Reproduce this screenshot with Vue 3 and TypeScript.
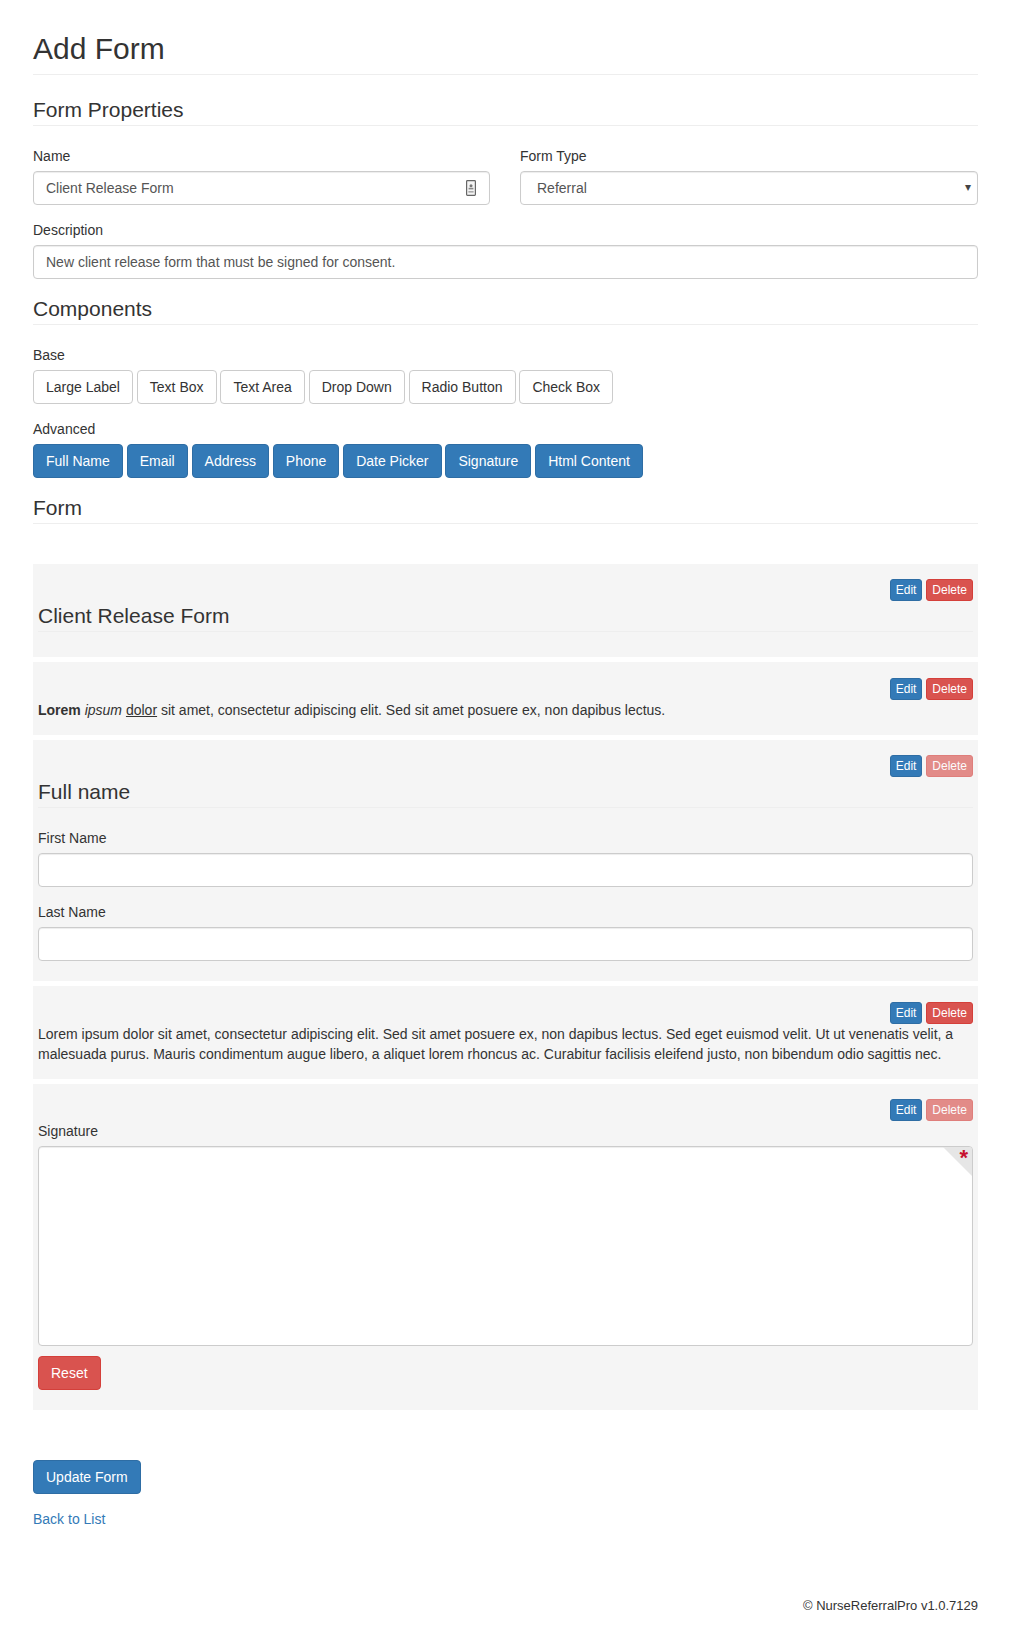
<script setup lang="ts">
const base: string[] = ['Large Label', 'Text Box', 'Text Area', 'Drop Down', 'Radio Button', 'Check Box']
const advanced: string[] = ['Full Name', 'Email', 'Address', 'Phone', 'Date Picker', 'Signature', 'Html Content']
</script>

<template>
  <div class="page">
    <header class="title-bar"><h1>Add Form</h1></header>

    <h3 class="section">Form Properties</h3>
    <div class="two-col">
      <div class="group">
        <label>Name</label>
        <div class="input-wrap">
          <input class="control" type="text" value="Client Release Form" />
          <svg class="field-icon" viewBox="0 0 10 16" width="10" height="16" aria-hidden="true">
            <rect x="0.6" y="0.6" width="8.8" height="14.8" rx="0.8" fill="#f4f4f4" stroke="#666" stroke-width="1.2" />
            <circle cx="5" cy="5.8" r="1.5" fill="#777" />
            <rect x="2.6" y="7.8" width="4.8" height="1.6" fill="#888" />
            <rect x="2.4" y="11" width="5.2" height="1.6" fill="#aaa" />
          </svg>
        </div>
      </div>
      <div class="group">
        <label>Form Type</label>
        <div class="input-wrap">
          <select class="control select">
            <option>Referral</option>
          </select>
          <span class="caret">▾</span>
        </div>
      </div>
    </div>
    <div class="group">
      <label>Description</label>
      <input class="control" type="text" value="New client release form that must be signed for consent." />
    </div>

    <h3 class="section">Components</h3>
    <div class="group">
      <label>Base</label>
      <div class="btn-row">
        <button v-for="b in base" :key="b" class="btn btn-default">{{ b }}</button>
      </div>
    </div>
    <div class="group">
      <label>Advanced</label>
      <div class="btn-row">
        <button v-for="a in advanced" :key="a" class="btn btn-primary">{{ a }}</button>
      </div>
    </div>

    <h3 class="section">Form</h3>

    <div class="stack">
      <section class="panel">
        <div class="tools">
          <button class="xs btn-primary">Edit</button>
          <button class="xs btn-danger">Delete</button>
        </div>
        <h3 class="section">Client Release Form</h3>
      </section>

      <section class="panel text-panel">
        <div class="tools">
          <button class="xs btn-primary">Edit</button>
          <button class="xs btn-danger">Delete</button>
        </div>
        <p><strong>Lorem</strong> <em>ipsum</em> <u>dolor</u> sit amet, consectetur adipiscing elit. Sed sit amet posuere ex, non dapibus lectus.</p>
      </section>

      <section class="panel">
        <div class="tools">
          <button class="xs btn-primary">Edit</button>
          <button class="xs btn-danger" disabled>Delete</button>
        </div>
        <h3 class="section">Full name</h3>
        <div class="group">
          <label>First Name</label>
          <input class="control" type="text" />
        </div>
        <div class="group">
          <label>Last Name</label>
          <input class="control" type="text" />
        </div>
      </section>

      <section class="panel text-panel">
        <div class="tools">
          <button class="xs btn-primary">Edit</button>
          <button class="xs btn-danger">Delete</button>
        </div>
        <p>Lorem ipsum dolor sit amet, consectetur adipiscing elit. Sed sit amet posuere ex, non dapibus lectus. Sed eget euismod velit. Ut ut venenatis velit, a malesuada purus. Mauris condimentum augue libero, a aliquet lorem rhoncus ac. Curabitur facilisis eleifend justo, non bibendum odio sagittis nec.</p>
      </section>

      <section class="panel">
        <div class="tools">
          <button class="xs btn-primary">Edit</button>
          <button class="xs btn-danger" disabled>Delete</button>
        </div>
        <div class="group">
          <label>Signature</label>
          <div class="sig-pad">
            <span class="corner"></span>
            <span class="star">*</span>
          </div>
          <button class="btn btn-danger reset">Reset</button>
        </div>
      </section>
    </div>

    <div class="actions">
      <button class="btn btn-primary">Update Form</button>
    </div>
    <div class="back"><a href="#">Back to List</a></div>

    <footer class="foot">© NurseReferralPro v1.0.7129</footer>
  </div>
</template>

<style>
html, body { margin: 0; background: #fff; }
</style>

<style scoped>
* { box-sizing: border-box; }
.page {
  padding: 32px 41px 19px 33px;
  font-family: "Liberation Sans", Arial, sans-serif;
  font-size: 14px;
  line-height: 20px;
  color: #333;
}
.title-bar {
  padding-bottom: 9px;
  margin-bottom: 20px;
  border-bottom: 1px solid #eee;
}
h1 {
  margin: 0;
  font-size: 30px;
  line-height: 33px;
  font-weight: 500;
}
.section {
  margin: 0 0 20px;
  padding: 3px 0 3.9px;
  font-size: 21px;
  line-height: 23.1px;
  font-weight: 500;
  border-bottom: 1px solid #eee;
}
.two-col {
  display: grid;
  grid-template-columns: 457px 1fr;
  column-gap: 30px;
}
.group { margin-bottom: 15px; }
label {
  display: block;
  margin-bottom: 5px;
  font-weight: 400;
}
.input-wrap { position: relative; }
.control {
  display: block;
  width: 100%;
  height: 34px;
  padding: 6px 12px;
  font-family: inherit;
  font-size: 14px;
  line-height: 20px;
  color: #555;
  background: #fff;
  border: 1px solid #ccc;
  border-radius: 4px;
  box-shadow: inset 0 1px 1px rgba(0, 0, 0, 0.075);
}
.select {
  appearance: none;
  padding-left: 16px;
}
.field-icon {
  position: absolute;
  right: 14px;
  top: 9px;
}
.caret {
  position: absolute;
  right: 7px;
  top: 6px;
  font-size: 12px;
  color: #444;
  pointer-events: none;
}
.btn-row {
  display: flex;
  flex-wrap: wrap;
  gap: 3.89px;
}
.btn {
  display: inline-block;
  padding: 6px 12px;
  font-family: inherit;
  font-size: 14px;
  line-height: 20px;
  border: 1px solid transparent;
  border-radius: 4px;
  white-space: nowrap;
}
.btn-default { color: #333; background: #fff; border-color: #ccc; }
.btn-primary { color: #fff; background: #337ab7; border: 1px solid #2e6da4; }
.btn-danger { color: #fff; background: #d9534f; border: 1px solid #d43f3a; }
.stack {
  display: flex;
  flex-direction: column;
  gap: 5px;
  margin-top: 40px;
}
.panel {
  padding: 15px 5px 5px;
  background: #f5f5f5;
}
.text-panel { padding-top: 16px; }
.tools {
  display: flex;
  justify-content: flex-end;
  gap: 3.89px;
}
.xs {
  padding: 1px 5px;
  font-family: inherit;
  font-size: 12px;
  line-height: 18px;
  border-radius: 3px;
}
.xs:disabled { opacity: 0.65; }
p { margin: 0 0 10px; }
.sig-pad {
  position: relative;
  height: 200px;
  background: #fff;
  border: 1px solid #ccc;
  border-radius: 4px;
  overflow: hidden;
  box-shadow: inset 0 1px 1px rgba(0, 0, 0, 0.075);
}
.corner {
  position: absolute;
  top: 0;
  right: 0;
  width: 0;
  height: 0;
  border-top: 29px solid #e6e6e6;
  border-left: 29px solid transparent;
}
.star {
  position: absolute;
  top: 0;
  right: 4px;
  font-size: 22px;
  font-weight: 700;
  line-height: 22px;
  color: #c7102e;
}
.reset { margin-top: 10px; }
.actions { margin-top: 50px; margin-bottom: 15px; }
.back { margin-bottom: 67px; }
a { color: #337ab7; text-decoration: none; }
.foot {
  text-align: right;
  font-size: 13px;
}
</style>
